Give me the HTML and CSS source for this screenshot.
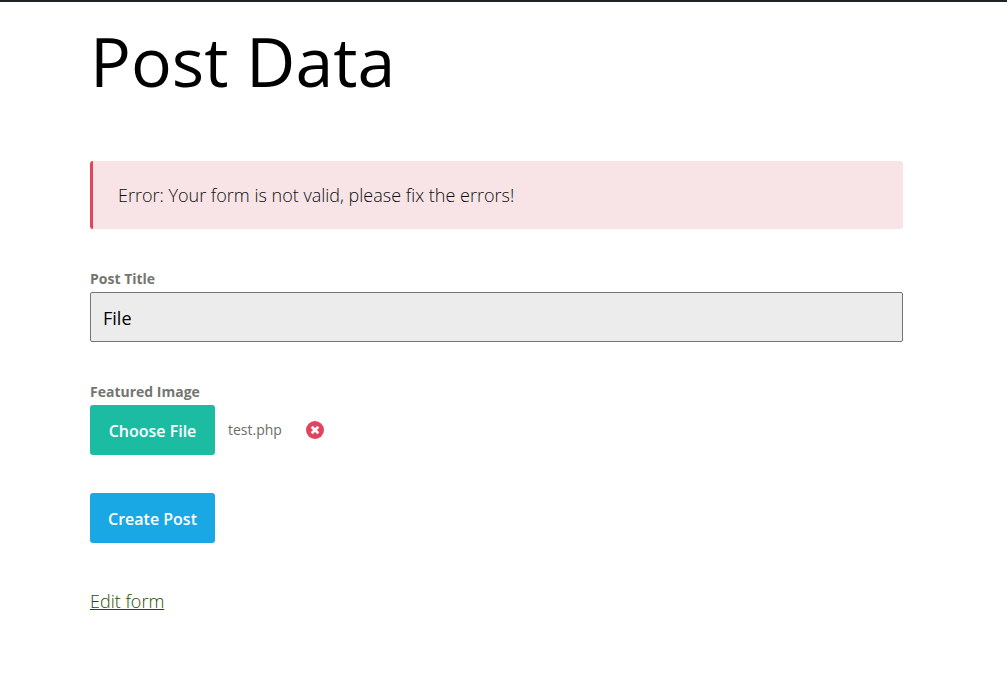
FILE: index.html
```html
<!DOCTYPE html>
<html lang="en">
<head>
<meta charset="utf-8">
<meta name="viewport" content="width=device-width, initial-scale=1">
<title>Post Data</title>
<link rel="stylesheet" href="styles.css">
</head>
<body>
<main class="page">
  <h1 class="page-title">Post Data</h1>
  <div class="alert" role="alert">Error: Your form is not valid, please fix the errors!</div>
  <form class="post-form">
    <div class="field">
      <label class="field-label" for="post-title">Post Title</label>
      <input class="text-input" id="post-title" type="text" value="File">
    </div>
    <div class="field">
      <label class="field-label" for="choose-file">Featured Image</label>
      <div class="file-row">
        <button class="button button-file" id="choose-file" type="button">Choose File</button>
        <span class="file-name">test.php</span>
        <button class="remove" type="button" aria-label="Remove file">
          <svg class="remove-icon" viewBox="0 0 18 18" aria-hidden="true">
            <circle cx="9" cy="9" r="9" fill="#e2435f"/>
            <path d="M5.7 5.7l6.6 6.6M12.3 5.7l-6.6 6.6" stroke="#fff" stroke-width="2.7"/>
          </svg>
        </button>
      </div>
    </div>
    <button class="button button-submit" type="submit">Create Post</button>
  </form>
  <a class="edit-link" href="#edit">Edit form</a>
</main>
</body>
</html>
```
FILE: styles.css
```css
* {
  box-sizing: border-box;
}

body {
  margin: 0;
  border-top: 2px solid #1d2327;
  background: #fff;
  color: #0c0d10;
  font-family: "Segoe UI", "Open Sans", "Noto Sans", sans-serif;
  font-size: 18px;
  font-weight: 300;
  line-height: 28px;
}

.page {
  display: flex;
  flex-direction: column;
  align-items: stretch;
  margin: 0 104px 0 90px;
  padding: 15px 0 64px;
}

.page-title {
  margin: 0 0 56px;
  color: #000;
  font-size: 68px;
  font-weight: 400;
  line-height: 88px;
}

.alert {
  margin-bottom: 38px;
  padding: 20px 25px;
  border-left: 3px solid #e2435f;
  border-radius: 3px;
  background: #f8e4e6;
}

.post-form {
  display: flex;
  flex-direction: column;
  align-items: flex-start;
  gap: 38px;
}

.field {
  width: 100%;
}

.field-label {
  display: block;
  margin-bottom: 1px;
  color: #757570;
  font-size: 14px;
  font-weight: 700;
  line-height: 24px;
}

.text-input {
  display: block;
  width: 100%;
  height: 50px;
  padding: 1px 12px 0;
  border: 1px solid #757570;
  border-radius: 2px;
  background: #ececec;
  color: #000;
  font: inherit;
  font-weight: 400;
}

.file-row {
  display: flex;
  align-items: center;
}

.button {
  min-width: 125px;
  height: 50px;
  padding: 2px 16px 0;
  border: 0;
  border-radius: 3px;
  color: #fff;
  font: inherit;
  font-size: 16px;
  font-weight: 600;
  white-space: nowrap;
}

.button-file {
  background: #1cbca2;
}

.button-submit {
  background: #1aa8e4;
}

.file-name {
  margin: 0 24px 0 13px;
  color: #6c6c68;
  font-size: 14px;
  font-weight: 500;
}

.remove {
  padding: 0;
  border: 0;
  background: none;
}

.remove-icon {
  display: block;
  width: 18px;
  height: 18px;
}

.edit-link {
  align-self: flex-start;
  margin-top: 44px;
  color: #1f4d00;
  text-decoration: underline;
}
```
